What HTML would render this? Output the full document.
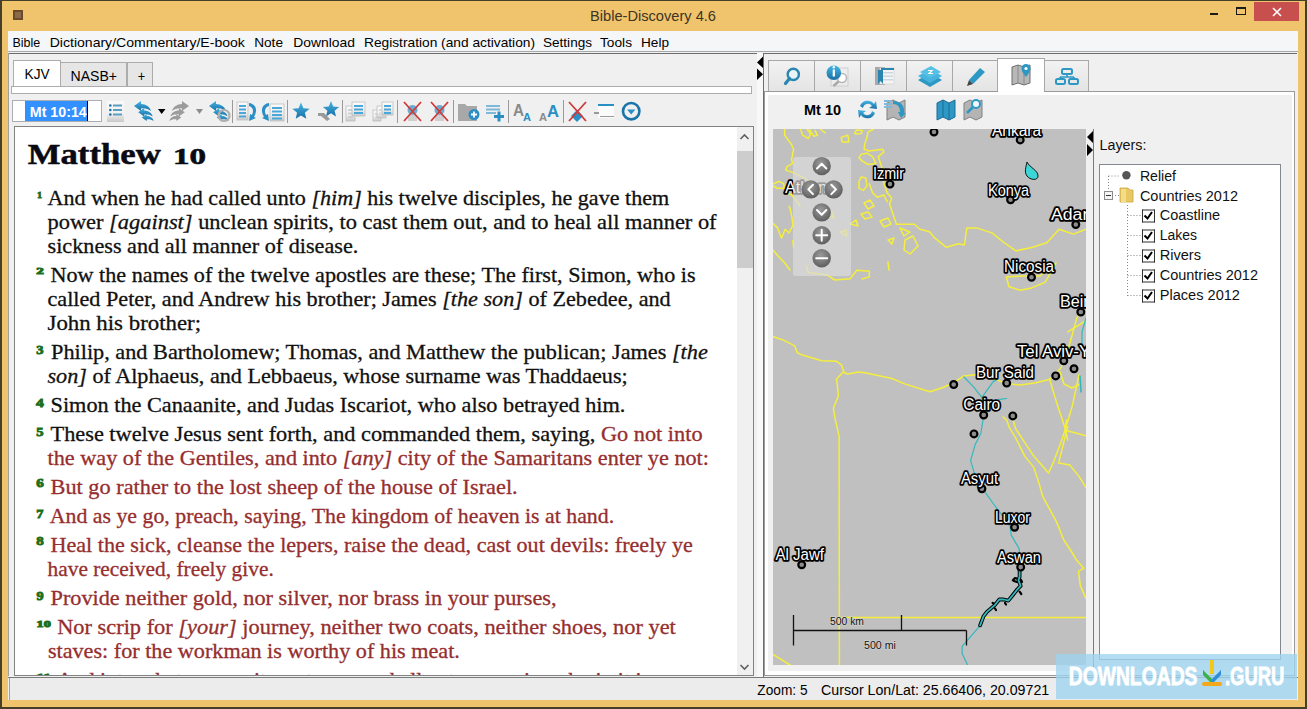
<!DOCTYPE html>
<html><head><meta charset="utf-8"><style>
html,body{margin:0;padding:0;width:1307px;height:709px;overflow:hidden;background:#F0F0F0;}
svg{display:block;}
</style></head><body>
<svg width="1307" height="709" viewBox="0 0 1307 709" shape-rendering="auto">
<rect x="0" y="0" width="1307" height="709" fill="#46402a" />
<rect x="2" y="1" width="1303" height="706" fill="#F0C46C" />
<rect x="8" y="31" width="1290" height="669" fill="#F0F0F0" />
<rect x="13" y="10" width="10" height="10" fill="#6b4a2c" />
<rect x="15" y="12" width="6" height="6" fill="#8a6a48" />
<text x="590" y="21" font-family="Liberation Sans" font-size="15" font-weight="normal" font-style="normal" fill="#3d3424" textLength="126" lengthAdjust="spacingAndGlyphs" >Bible-Discovery 4.6</text>
<rect x="1210" y="13" width="8" height="2" fill="#1a1a1a" />
<rect x="1236" y="7" width="10" height="1" fill="#1a1a1a" />
<rect x="1236" y="14" width="10" height="1" fill="#1a1a1a" />
<rect x="1236" y="7" width="1" height="8" fill="#1a1a1a" />
<rect x="1245" y="7" width="1" height="8" fill="#1a1a1a" />
<rect x="1236" y="8" width="10" height="1" fill="#1a1a1a" />
<rect x="1254" y="2" width="45" height="19" fill="#C7504F" />
<path d="M1273 8 L1281 16 M1281 8 L1273 16" stroke="#fff" stroke-width="1.6"/>
<rect x="8" y="31" width="1290" height="20" fill="#F5F6F7" />
<rect x="8" y="51" width="1290" height="1" fill="#A8A8A8" />
<text x="12.5" y="46.5" font-family="Liberation Sans" font-size="13" font-weight="normal" font-style="normal" fill="#000" textLength="27.8" lengthAdjust="spacingAndGlyphs" >Bible</text>
<text x="49.7" y="46.5" font-family="Liberation Sans" font-size="13" font-weight="normal" font-style="normal" fill="#000" textLength="195.2" lengthAdjust="spacingAndGlyphs" >Dictionary/Commentary/E-book</text>
<text x="254.2" y="46.5" font-family="Liberation Sans" font-size="13" font-weight="normal" font-style="normal" fill="#000" textLength="28.8" lengthAdjust="spacingAndGlyphs" >Note</text>
<text x="293.3" y="46.5" font-family="Liberation Sans" font-size="13" font-weight="normal" font-style="normal" fill="#000" textLength="61.7" lengthAdjust="spacingAndGlyphs" >Download</text>
<text x="364" y="46.5" font-family="Liberation Sans" font-size="13" font-weight="normal" font-style="normal" fill="#000" textLength="171" lengthAdjust="spacingAndGlyphs" >Registration (and activation)</text>
<text x="543" y="46.5" font-family="Liberation Sans" font-size="13" font-weight="normal" font-style="normal" fill="#000" textLength="49" lengthAdjust="spacingAndGlyphs" >Settings</text>
<text x="600" y="46.5" font-family="Liberation Sans" font-size="13" font-weight="normal" font-style="normal" fill="#000" textLength="32" lengthAdjust="spacingAndGlyphs" >Tools</text>
<text x="641" y="46.5" font-family="Liberation Sans" font-size="13" font-weight="normal" font-style="normal" fill="#000" textLength="28" lengthAdjust="spacingAndGlyphs" >Help</text>
<rect x="8" y="53" width="749" height="1" fill="#6E6E6E" />
<rect x="8" y="53" width="1" height="623" fill="#A0A0A0" />
<rect x="13" y="60" width="48" height="27" fill="#FFFFFF" />
<rect x="13" y="60" width="48" height="1" fill="#ACACAC" />
<rect x="13" y="86" width="48" height="1" fill="#ACACAC" />
<rect x="13" y="60" width="1" height="27" fill="#ACACAC" />
<rect x="60" y="60" width="1" height="27" fill="#ACACAC" />
<rect x="60" y="62" width="67" height="25" fill="#E6E6E6" />
<rect x="60" y="62" width="67" height="1" fill="#ACACAC" />
<rect x="60" y="86" width="67" height="1" fill="#ACACAC" />
<rect x="60" y="62" width="1" height="25" fill="#ACACAC" />
<rect x="126" y="62" width="1" height="25" fill="#ACACAC" />
<rect x="127" y="62" width="26" height="25" fill="#E6E6E6" />
<rect x="127" y="62" width="26" height="1" fill="#ACACAC" />
<rect x="127" y="86" width="26" height="1" fill="#ACACAC" />
<rect x="127" y="62" width="1" height="25" fill="#ACACAC" />
<rect x="152" y="62" width="1" height="25" fill="#ACACAC" />
<text x="24.6" y="78.5" font-family="Liberation Sans" font-size="14" font-weight="normal" font-style="normal" fill="#000" textLength="25" lengthAdjust="spacingAndGlyphs" >KJV</text>
<text x="70.5" y="80.6" font-family="Liberation Sans" font-size="14" font-weight="normal" font-style="normal" fill="#000" textLength="46.5" lengthAdjust="spacingAndGlyphs" >NASB+</text>
<text x="137.8" y="80.6" font-family="Liberation Sans" font-size="14" font-weight="normal" font-style="normal" fill="#000" textLength="7.4" lengthAdjust="spacingAndGlyphs" >+</text>
<rect x="11" y="86" width="741" height="8" fill="#FFFFFF" />
<rect x="11" y="86" width="741" height="1" fill="#ACACAC" />
<rect x="11" y="93" width="741" height="1" fill="#ACACAC" />
<rect x="11" y="86" width="1" height="8" fill="#ACACAC" />
<rect x="751" y="86" width="1" height="8" fill="#ACACAC" />
<rect x="12" y="100" width="90" height="22" fill="#FFFFFF" />
<rect x="12" y="100" width="90" height="1" fill="#ABADB3" />
<rect x="12" y="121" width="90" height="1" fill="#ABADB3" />
<rect x="12" y="100" width="1" height="22" fill="#ABADB3" />
<rect x="101" y="100" width="1" height="22" fill="#ABADB3" />
<rect x="25" y="101" width="62" height="20" fill="#3390FF" />
<rect x="87" y="101" width="1" height="20" fill="#000" />
<text x="29.8" y="116.8" font-family="Liberation Sans" font-size="14" font-weight="bold" font-style="normal" fill="#FFFFFF" textLength="57" lengthAdjust="spacingAndGlyphs" >Mt 10:14</text>
<defs><linearGradient id="pageg" x1="0" y1="0" x2="0" y2="1"><stop offset="0" stop-color="#FAFAFA"/><stop offset="0.6" stop-color="#F0F0F0"/><stop offset="1" stop-color="#C8C8C8"/></linearGradient><linearGradient id="blueg" x1="0" y1="0" x2="0" y2="1"><stop offset="0" stop-color="#45B5E6"/><stop offset="1" stop-color="#1A6FA3"/></linearGradient></defs>
<rect x="107" y="101" width="17" height="21" fill="url(#pageg)" />
<circle cx="110.3" cy="105.5" r="1.3" fill="#1B74A8"/>
<rect x="113" y="104.5" width="9" height="2" fill="#5A9EC0" />
<circle cx="110.3" cy="110" r="1.3" fill="#1B74A8"/>
<rect x="113" y="109" width="9" height="2" fill="#5A9EC0" />
<circle cx="110.3" cy="114.5" r="1.3" fill="#1B74A8"/>
<rect x="113" y="113.5" width="9" height="2" fill="#5A9EC0" />
<g transform="translate(132,101)"><path transform="translate(2.0,0) scale(1.0)" d="M0 5 L7 0 L7 3 C12 3 16 6 17 10 C14 8 11 7 7 7.5 L7 10 Z" fill="url(#blueg)"/><path transform="translate(6.2,7) scale(0.85)" d="M0 5 L7 0 L7 3 C12 3 16 6 17 10 C14 8 11 7 7 7.5 L7 10 Z" fill="url(#blueg)"/><path transform="translate(9.8,13) scale(0.7)" d="M0 5 L7 0 L7 3 C12 3 16 6 17 10 C14 8 11 7 7 7.5 L7 10 Z" fill="url(#blueg)"/></g>
<path d="M158 109 H165.5 L161.7 114 Z" fill="#000"/>
<g transform="translate(170,101) translate(21,0) scale(-1,1)"><path transform="translate(2.0,0) scale(1.0)" d="M0 5 L7 0 L7 3 C12 3 16 6 17 10 C14 8 11 7 7 7.5 L7 10 Z" fill="#9C9C9C"/><path transform="translate(6.2,7) scale(0.85)" d="M0 5 L7 0 L7 3 C12 3 16 6 17 10 C14 8 11 7 7 7.5 L7 10 Z" fill="#9C9C9C"/><path transform="translate(9.8,13) scale(0.7)" d="M0 5 L7 0 L7 3 C12 3 16 6 17 10 C14 8 11 7 7 7.5 L7 10 Z" fill="#9C9C9C"/></g>
<path d="M196 109 H203 L199.5 114 Z" fill="#8c8c8c"/>
<g transform="translate(207,101)"><path transform="translate(2.0,0) scale(1.0)" d="M0 5 L7 0 L7 3 C12 3 16 6 17 10 C14 8 11 7 7 7.5 L7 10 Z" fill="url(#blueg)"/><path transform="translate(6.2,7) scale(0.85)" d="M0 5 L7 0 L7 3 C12 3 16 6 17 10 C14 8 11 7 7 7.5 L7 10 Z" fill="url(#blueg)"/><path transform="translate(9.8,13) scale(0.7)" d="M0 5 L7 0 L7 3 C12 3 16 6 17 10 C14 8 11 7 7 7.5 L7 10 Z" fill="url(#blueg)"/></g>
<circle cx="224" cy="115.5" r="5.5" fill="none" stroke="#B0B0B0" stroke-width="2.2"/>
<rect x="232" y="100" width="1" height="23" fill="#9A9A9A" />
<rect x="287" y="100" width="1" height="23" fill="#9A9A9A" />
<rect x="342" y="100" width="1" height="23" fill="#9A9A9A" />
<rect x="397" y="100" width="1" height="23" fill="#9A9A9A" />
<rect x="453" y="100" width="1" height="23" fill="#9A9A9A" />
<rect x="508" y="100" width="1" height="23" fill="#9A9A9A" />
<rect x="563" y="100" width="1" height="23" fill="#9A9A9A" />
<rect x="237" y="102" width="11" height="18" fill="url(#pageg)" stroke="#BFBFBF" stroke-width="0.8"/>
<rect x="239" y="105.0" width="7" height="2" fill="#4AA8D8" />
<rect x="239" y="108.5" width="7" height="2" fill="#4AA8D8" />
<rect x="239" y="112.0" width="7" height="2" fill="#4AA8D8" />
<rect x="239" y="115.5" width="7" height="2" fill="#4AA8D8" />
<path d="M249 103 C256 104 258 110 254 117 L256 118 L249 121 L250 114 L252 115 C254 111 253 107 249 106 Z" fill="#2A8FC4"/>
<rect x="270" y="104" width="14" height="17" fill="url(#pageg)" stroke="#BFBFBF" stroke-width="0.8"/>
<rect x="272" y="107.0" width="10" height="2" fill="#4AA8D8" />
<rect x="272" y="110.5" width="10" height="2" fill="#4AA8D8" />
<rect x="272" y="114.0" width="10" height="2" fill="#4AA8D8" />
<rect x="272" y="117.5" width="10" height="2" fill="#4AA8D8" />
<path d="M269 103 C262 104 260 110 264 117 L262 118 L269 121 L268 114 L266 115 C264 111 265 107 269 106 Z" fill="#2A8FC4"/>
<path d="M301.0 102.5 L303.4 108.2 L309.6 108.7 L304.9 112.8 L306.3 118.8 L301.0 115.5 L295.7 118.8 L297.1 112.8 L292.4 108.7 L298.6 108.2 Z" fill="url(#blueg)"/>
<path d="M331.0 101.0 L333.2 106.4 L339.1 106.9 L334.6 110.7 L336.0 116.4 L331.0 113.3 L326.0 116.4 L327.4 110.7 L322.9 106.9 L328.8 106.4 Z" fill="url(#blueg)"/>
<path d="M318 113 L324 113 L330 119 L327 121 L321 116 L318 116 Z" fill="#9A9A9A"/>
<rect x="346" y="106" width="9" height="15" fill="url(#pageg)" stroke="#BFBFBF" stroke-width="0.8"/>
<rect x="348" y="109.0" width="5" height="2" fill="#cfcfcf" />
<rect x="348" y="112.5" width="5" height="2" fill="#cfcfcf" />
<rect x="348" y="116.0" width="5" height="2" fill="#cfcfcf" />
<rect x="352" y="102" width="13" height="14" fill="url(#pageg)" stroke="#BFBFBF" stroke-width="0.8"/>
<rect x="354" y="105.0" width="9" height="2" fill="#4AA8D8" />
<rect x="354" y="108.5" width="9" height="2" fill="#4AA8D8" />
<rect x="354" y="112.0" width="9" height="2" fill="#4AA8D8" />
<rect x="373" y="110" width="8" height="11" fill="url(#pageg)" stroke="#BFBFBF" stroke-width="0.8"/>
<rect x="375" y="113.0" width="4" height="2" fill="#d8d8d8" />
<rect x="375" y="116.5" width="4" height="2" fill="#d8d8d8" />
<rect x="377" y="106" width="9" height="12" fill="url(#pageg)" stroke="#BFBFBF" stroke-width="0.8"/>
<rect x="379" y="109.0" width="5" height="2" fill="#d8d8d8" />
<rect x="379" y="112.5" width="5" height="2" fill="#d8d8d8" />
<rect x="382" y="102" width="11" height="13" fill="url(#pageg)" stroke="#BFBFBF" stroke-width="0.8"/>
<rect x="384" y="105.0" width="7" height="2" fill="#4AA8D8" />
<rect x="384" y="108.5" width="7" height="2" fill="#4AA8D8" />
<rect x="384" y="112.0" width="7" height="2" fill="#4AA8D8" />
<circle cx="412.5" cy="110" r="5" fill="#4A9CC8" opacity="0.8"/>
<path d="M408 115 h9 v6 h-9 Z" fill="#cfcfcf"/>
<path d="M404 102 L421 121 M421 102 L404 121" stroke="#D03A3A" stroke-width="1.8"/>
<circle cx="439.5" cy="110" r="5" fill="#4A9CC8" opacity="0.8"/>
<path d="M435 115 h9 v6 h-9 Z" fill="#cfcfcf"/>
<path d="M431 102 L448 121 M448 102 L431 121" stroke="#D03A3A" stroke-width="1.8"/>
<path d="M458 104 h7 l2 2 h10 v15 h-19 Z" fill="#A8A8A8"/>
<circle cx="474" cy="114.5" r="5.5" fill="#2A8FC4"/>
<path d="M471 114.5 h6 M474 111.5 v6" stroke="#fff" stroke-width="1.8"/>
<rect x="486" y="105" width="14" height="2" fill="#7FB8D8" />
<rect x="486" y="108.5" width="14" height="2" fill="#7FB8D8" />
<rect x="486" y="112" width="10" height="2" fill="#7FB8D8" />
<path d="M494 116.5 h10 M499 111.5 v10" stroke="#2A8FC4" stroke-width="3"/>
<text x="513" y="116" font-family="Liberation Sans" font-size="16" font-weight="bold" font-style="normal" fill="#8A8A8A" textLength="11" lengthAdjust="spacingAndGlyphs" >A</text>
<text x="523" y="121" font-family="Liberation Sans" font-size="11" font-weight="bold" font-style="normal" fill="#2A8FC4" textLength="8" lengthAdjust="spacingAndGlyphs" >A</text>
<text x="539" y="121" font-family="Liberation Sans" font-size="11" font-weight="bold" font-style="normal" fill="#8A8A8A" textLength="8" lengthAdjust="spacingAndGlyphs" >A</text>
<text x="547" y="117" font-family="Liberation Sans" font-size="16" font-weight="bold" font-style="normal" fill="#2A8FC4" textLength="12" lengthAdjust="spacingAndGlyphs" >A</text>
<path d="M577 110 L583 116 L577 122 L571 116 Z" fill="#2A8FC4"/>
<path d="M569 102 L586 121 M586 102 L569 121" stroke="#D03A3A" stroke-width="1.8"/>
<rect x="598" y="104" width="16" height="2" fill="#2A8FC4" />
<rect x="598" y="106" width="16" height="12" fill="#FBFBFB" />
<rect x="594" y="112" width="5" height="2" fill="#9a9a9a" />
<rect x="600" y="116" width="14" height="1" fill="#9a9a9a" />
<circle cx="631.2" cy="111.2" r="8.2" fill="none" stroke="#1B74A8" stroke-width="2.6"/>
<path d="M627 109.5 L635.4 109.5 L631.2 114.5 Z" fill="#2A8FC4"/>
<rect x="14" y="126" width="740" height="550" fill="#FFFFFF" />
<rect x="14" y="126" width="740" height="1" fill="#828282" />
<rect x="14" y="675" width="740" height="1" fill="#828282" />
<rect x="14" y="126" width="1" height="550" fill="#828282" />
<rect x="753" y="126" width="1" height="550" fill="#828282" />
<rect x="737" y="127" width="16" height="548" fill="#F0F0F0" />
<rect x="737" y="151" width="16" height="117" fill="#CDCDCD" />
<path d="M740.5 139 L744.5 135 L748.5 139" stroke="#606060" stroke-width="1.6" fill="none"/>
<path d="M740.5 665 L744.5 669 L748.5 665" stroke="#606060" stroke-width="1.6" fill="none"/>
<text x="27.7" y="163.7" font-family="Liberation Serif" font-size="30" font-weight="bold" font-style="normal" fill="#0a0a14" textLength="133.1" lengthAdjust="spacingAndGlyphs" stroke="#0a0a14" stroke-width="0.5">Matthew</text>
<text x="173" y="163.7" font-family="Liberation Serif" font-size="23.5" font-weight="bold" font-style="normal" fill="#0a0a14" textLength="33" lengthAdjust="spacingAndGlyphs" stroke="#0a0a14" stroke-width="0.6">10</text>
<clipPath id="txtclip"><rect x="15" y="127" width="722" height="548"/></clipPath>
<g clip-path="url(#txtclip)">
<text x="37.2" y="197.5" font-family="Liberation Serif" font-size="8.14" font-weight="bold" font-style="normal" fill="#1B6F1B" textLength="4.6" lengthAdjust="spacingAndGlyphs" stroke="#1B6F1B" stroke-width="0.9">1</text>
<text x="47.6" y="204.5" font-family="Liberation Serif" font-size="21" font-weight="normal" font-style="normal" fill="#111111" textLength="621.6" lengthAdjust="spacingAndGlyphs" stroke="#111111" stroke-width="0.3">And when he had called unto <tspan font-style="italic">[him]</tspan> his twelve disciples, he gave them</text>
<text x="47.5" y="228.5" font-family="Liberation Serif" font-size="21" font-weight="normal" font-style="normal" fill="#111111" textLength="669.1" lengthAdjust="spacingAndGlyphs" stroke="#111111" stroke-width="0.3">power <tspan font-style="italic">[against]</tspan> unclean spirits, to cast them out, and to heal all manner of</text>
<text x="47.5" y="252.5" font-family="Liberation Serif" font-size="21" font-weight="normal" font-style="normal" fill="#111111" textLength="310.9" lengthAdjust="spacingAndGlyphs" stroke="#111111" stroke-width="0.3">sickness and all manner of disease.</text>
<text x="36.2" y="274.0" font-family="Liberation Serif" font-size="8.88" font-weight="bold" font-style="normal" fill="#1B6F1B" textLength="7.5" lengthAdjust="spacingAndGlyphs" stroke="#1B6F1B" stroke-width="0.9">2</text>
<text x="50.5" y="281.5" font-family="Liberation Serif" font-size="21" font-weight="normal" font-style="normal" fill="#111111" textLength="645.1" lengthAdjust="spacingAndGlyphs" stroke="#111111" stroke-width="0.3">Now the names of the twelve apostles are these; The first, Simon, who is</text>
<text x="47.5" y="305.5" font-family="Liberation Serif" font-size="21" font-weight="normal" font-style="normal" fill="#111111" textLength="623.2" lengthAdjust="spacingAndGlyphs" stroke="#111111" stroke-width="0.3">called Peter, and Andrew his brother; James <tspan font-style="italic">[the son]</tspan> of Zebedee, and</text>
<text x="47.5" y="329.5" font-family="Liberation Serif" font-size="21" font-weight="normal" font-style="normal" fill="#111111" textLength="153.5" lengthAdjust="spacingAndGlyphs" stroke="#111111" stroke-width="0.3">John his brother;</text>
<text x="36.2" y="354.0" font-family="Liberation Serif" font-size="13.31" font-weight="bold" font-style="normal" fill="#1B6F1B" textLength="7.3" lengthAdjust="spacingAndGlyphs" stroke="#1B6F1B" stroke-width="0.9">3</text>
<text x="51.0" y="358.5" font-family="Liberation Serif" font-size="21" font-weight="normal" font-style="normal" fill="#111111" textLength="656.8" lengthAdjust="spacingAndGlyphs" stroke="#111111" stroke-width="0.3">Philip, and Bartholomew; Thomas, and Matthew the publican; James <tspan font-style="italic">[the</tspan></text>
<text x="47.5" y="382.5" font-family="Liberation Serif" font-size="21" font-weight="normal" font-style="normal" fill="#111111" textLength="580.2" lengthAdjust="spacingAndGlyphs" stroke="#111111" stroke-width="0.3"><tspan font-style="italic">son]</tspan> of Alphaeus, and Lebbaeus, whose surname was Thaddaeus;</text>
<text x="36" y="407.0" font-family="Liberation Serif" font-size="13.02" font-weight="bold" font-style="normal" fill="#1B6F1B" textLength="7.8" lengthAdjust="spacingAndGlyphs" stroke="#1B6F1B" stroke-width="0.9">4</text>
<text x="50.5" y="411.5" font-family="Liberation Serif" font-size="21" font-weight="normal" font-style="normal" fill="#111111" textLength="574.9" lengthAdjust="spacingAndGlyphs" stroke="#111111" stroke-width="0.3">Simon the Canaanite, and Judas Iscariot, who also betrayed him.</text>
<text x="36.2" y="435.9" font-family="Liberation Serif" font-size="13.02" font-weight="bold" font-style="normal" fill="#1B6F1B" textLength="7.3" lengthAdjust="spacingAndGlyphs" stroke="#1B6F1B" stroke-width="0.9">5</text>
<text x="50.5" y="440.5" font-family="Liberation Serif" font-size="21" font-weight="normal" font-style="normal" fill="#111111" textLength="652.1" lengthAdjust="spacingAndGlyphs" stroke="#111111" stroke-width="0.3">These twelve Jesus sent forth, and commanded them, saying, <tspan fill="#962E2E" stroke="#962E2E">Go not into</tspan></text>
<text x="47.5" y="464.5" font-family="Liberation Serif" font-size="21" font-weight="normal" font-style="normal" fill="#962E2E" textLength="661.5" lengthAdjust="spacingAndGlyphs" stroke="#962E2E" stroke-width="0.3">the way of the Gentiles, and into <tspan font-style="italic">[any]</tspan> city of the Samaritans enter ye not:</text>
<text x="36.3" y="487.2" font-family="Liberation Serif" font-size="11.69" font-weight="bold" font-style="normal" fill="#1B6F1B" textLength="7.5" lengthAdjust="spacingAndGlyphs" stroke="#1B6F1B" stroke-width="0.9">6</text>
<text x="50.5" y="493.5" font-family="Liberation Serif" font-size="21" font-weight="normal" font-style="normal" fill="#962E2E" textLength="467.2" lengthAdjust="spacingAndGlyphs" stroke="#962E2E" stroke-width="0.3">But go rather to the lost sheep of the house of Israel.</text>
<text x="36.3" y="517.9" font-family="Liberation Serif" font-size="13.02" font-weight="bold" font-style="normal" fill="#1B6F1B" textLength="7.2" lengthAdjust="spacingAndGlyphs" stroke="#1B6F1B" stroke-width="0.9">7</text>
<text x="49.8" y="522.5" font-family="Liberation Serif" font-size="21" font-weight="normal" font-style="normal" fill="#962E2E" textLength="564.3" lengthAdjust="spacingAndGlyphs" stroke="#962E2E" stroke-width="0.3">And as ye go, preach, saying, The kingdom of heaven is at hand.</text>
<text x="36.3" y="544.7" font-family="Liberation Serif" font-size="13.31" font-weight="bold" font-style="normal" fill="#1B6F1B" textLength="7.5" lengthAdjust="spacingAndGlyphs" stroke="#1B6F1B" stroke-width="0.9">8</text>
<text x="50.5" y="551.5" font-family="Liberation Serif" font-size="21" font-weight="normal" font-style="normal" fill="#962E2E" textLength="642.3" lengthAdjust="spacingAndGlyphs" stroke="#962E2E" stroke-width="0.3">Heal the sick, cleanse the lepers, raise the dead, cast out devils: freely ye</text>
<text x="47.5" y="575.5" font-family="Liberation Serif" font-size="21" font-weight="normal" font-style="normal" fill="#962E2E" textLength="226.3" lengthAdjust="spacingAndGlyphs" stroke="#962E2E" stroke-width="0.3">have received, freely give.</text>
<text x="36.6" y="599.5" font-family="Liberation Serif" font-size="12.57" font-weight="bold" font-style="normal" fill="#1B6F1B" textLength="7.1" lengthAdjust="spacingAndGlyphs" stroke="#1B6F1B" stroke-width="0.9">9</text>
<text x="50.5" y="604.5" font-family="Liberation Serif" font-size="21" font-weight="normal" font-style="normal" fill="#962E2E" textLength="506.0" lengthAdjust="spacingAndGlyphs" stroke="#962E2E" stroke-width="0.3">Provide neither gold, nor silver, nor brass in your purses,</text>
<text x="36.6" y="626.6" font-family="Liberation Serif" font-size="8.73" font-weight="bold" font-style="normal" fill="#1B6F1B" textLength="14.2" lengthAdjust="spacingAndGlyphs" stroke="#1B6F1B" stroke-width="0.9">10</text>
<text x="57.2" y="633.5" font-family="Liberation Serif" font-size="21" font-weight="normal" font-style="normal" fill="#962E2E" textLength="618.6" lengthAdjust="spacingAndGlyphs" stroke="#962E2E" stroke-width="0.3">Nor scrip for <tspan font-style="italic">[your]</tspan> journey, neither two coats, neither shoes, nor yet</text>
<text x="47.9" y="657.5" font-family="Liberation Serif" font-size="21" font-weight="normal" font-style="normal" fill="#962E2E" textLength="412.0" lengthAdjust="spacingAndGlyphs" stroke="#962E2E" stroke-width="0.3">staves: for the workman is worthy of his meat.</text>
<text x="36.6" y="679.6" font-family="Liberation Serif" font-size="8.73" font-weight="bold" font-style="normal" fill="#1B6F1B" textLength="14.2" lengthAdjust="spacingAndGlyphs" stroke="#1B6F1B" stroke-width="0.9">11</text>
<text x="57.0" y="686.5" font-family="Liberation Serif" font-size="21" font-weight="normal" font-style="normal" fill="#962E2E" textLength="593.0" lengthAdjust="spacingAndGlyphs" stroke="#962E2E" stroke-width="0.3">And into whatsoever city or town ye shall enter, enquire who in it is</text>
</g>
<rect x="757" y="53" width="6" height="624" fill="#F8F8F8" />
<path d="M763 56.5 L757 62.5 L763 68 Z M757 68.5 L763 74.3 L757 80 Z" fill="#000"/>
<rect x="763" y="53" width="1" height="624" fill="#6E6E6E" />
<rect x="763" y="53" width="534" height="1" fill="#6E6E6E" />
<defs><linearGradient id="tabg" x1="0" y1="0" x2="0" y2="1"><stop offset="0" stop-color="#F2F2F2"/><stop offset="1" stop-color="#E4E4E4"/></linearGradient><radialGradient id="btng" cx="0.45" cy="0.35" r="0.7"><stop offset="0" stop-color="#9a9a9a"/><stop offset="1" stop-color="#5a5a5a"/></radialGradient></defs>
<rect x="764" y="54" width="533" height="37" fill="#F0F0F0" />
<rect x="768" y="61" width="46" height="30" fill="url(#tabg)" />
<rect x="768" y="60" width="47" height="1" fill="#A8A8A8" />
<rect x="768" y="91" width="47" height="1" fill="#A8A8A8" />
<rect x="768" y="60" width="1" height="32" fill="#A8A8A8" />
<rect x="814" y="60" width="1" height="32" fill="#A8A8A8" />
<rect x="814" y="61" width="46" height="30" fill="url(#tabg)" />
<rect x="814" y="60" width="47" height="1" fill="#A8A8A8" />
<rect x="814" y="91" width="47" height="1" fill="#A8A8A8" />
<rect x="814" y="60" width="1" height="32" fill="#A8A8A8" />
<rect x="860" y="60" width="1" height="32" fill="#A8A8A8" />
<rect x="860" y="61" width="46" height="30" fill="url(#tabg)" />
<rect x="860" y="60" width="47" height="1" fill="#A8A8A8" />
<rect x="860" y="91" width="47" height="1" fill="#A8A8A8" />
<rect x="860" y="60" width="1" height="32" fill="#A8A8A8" />
<rect x="906" y="60" width="1" height="32" fill="#A8A8A8" />
<rect x="906" y="61" width="46" height="30" fill="url(#tabg)" />
<rect x="906" y="60" width="47" height="1" fill="#A8A8A8" />
<rect x="906" y="91" width="47" height="1" fill="#A8A8A8" />
<rect x="906" y="60" width="1" height="32" fill="#A8A8A8" />
<rect x="952" y="60" width="1" height="32" fill="#A8A8A8" />
<rect x="952" y="61" width="45" height="30" fill="url(#tabg)" />
<rect x="952" y="60" width="46" height="1" fill="#A8A8A8" />
<rect x="952" y="91" width="46" height="1" fill="#A8A8A8" />
<rect x="952" y="60" width="1" height="32" fill="#A8A8A8" />
<rect x="997" y="60" width="1" height="32" fill="#A8A8A8" />
<rect x="997" y="58" width="48" height="34" fill="#FFFFFF" />
<rect x="997" y="58" width="48" height="1" fill="#A8A8A8" />
<rect x="997" y="91" width="48" height="1" fill="#A8A8A8" />
<rect x="997" y="58" width="1" height="34" fill="#A8A8A8" />
<rect x="1044" y="58" width="1" height="34" fill="#A8A8A8" />
<rect x="1044" y="61" width="44" height="30" fill="url(#tabg)" />
<rect x="1044" y="60" width="45" height="1" fill="#A8A8A8" />
<rect x="1044" y="91" width="45" height="1" fill="#A8A8A8" />
<rect x="1044" y="60" width="1" height="32" fill="#A8A8A8" />
<rect x="1088" y="60" width="1" height="32" fill="#A8A8A8" />
<circle cx="793.3" cy="74.4" r="5.6" fill="#EAF4F8" stroke="#2A86B0" stroke-width="2.4"/>
<path d="M789.5 78.5 L785.5 83.5" stroke="#2A86B0" stroke-width="3.2" stroke-linecap="round"/>
<rect x="831" y="68" width="17" height="18" fill="#EDEDED" stroke="#C8C8C8" stroke-width="0.8"/>
<circle cx="842" cy="78" r="4.5" fill="#fff" stroke="#B8B8B8" stroke-width="1.6"/>
<path d="M838.5 81.5 L833.5 86" stroke="#A8A8A8" stroke-width="2.4"/>
<circle cx="833.8" cy="72.8" r="7.3" fill="url(#blueg)"/>
<path d="M833.8 69.5 V76.5" stroke="#fff" stroke-width="2.2"/><circle cx="833.8" cy="67.3" r="1.2" fill="#fff"/>
<rect x="875" y="67" width="10" height="18" fill="#A8A8A8"/>
<rect x="880" y="68" width="14" height="16" fill="#F4F4F4" stroke="#D0D0D0" stroke-width="0.6"/>
<rect x="881" y="68" width="13" height="2" fill="#2A86B0" />
<rect x="883" y="72" width="10" height="1.5" fill="#C8D8E0" />
<rect x="883" y="75.5" width="10" height="1.5" fill="#C8D8E0" />
<rect x="883" y="79" width="10" height="1.5" fill="#C8D8E0" />
<path d="M878 70 h5 v14 l-2.5 -3 l-2.5 3 Z" fill="#2A86B0"/>
<path d="M918 80 L930 73 L942 80 L930 87 Z" fill="#2E98C4"/>
<path d="M918 76 L930 69 L942 76 L930 83 Z" fill="#46B4DC"/>
<path d="M920 72 L931 66 L941 72 L930 78 Z" fill="#56C0E6"/>
<path d="M928 70.5 h4 l-3 3 h4" stroke="#fff" stroke-width="1.2" fill="none"/>
<path d="M969 80 L980 68 L985 72 L973 84 Z" fill="#2E98C4"/>
<path d="M969 80 L973 84 L967 86 Z" fill="#444"/>
<path d="M1012 67 L1018 65 L1024 67 L1030 65 V83 L1024 85 L1018 83 L1012 85 Z" fill="#B8B8B8" stroke="#6E6E6E" stroke-width="1"/>
<path d="M1018 65 V83 M1024 67 V85" stroke="#8a8a8a" stroke-width="1"/>
<path d="M1026 77 C1022 72 1021.5 70 1021.5 68.5 A4.5 4.5 0 0 1 1030.5 68.5 C1030.5 70 1030 72 1026 77 Z" fill="#2E98C4"/>
<circle cx="1026" cy="68.5" r="1.6" fill="#fff"/>
<rect x="1062" y="69" width="10" height="5" rx="1.5" fill="none" stroke="#2E98C4" stroke-width="2"/>
<path d="M1067 74 V77 M1060 77 H1074 M1060 77 V79 M1074 77 V79" stroke="#2E98C4" stroke-width="1.6"/>
<rect x="1056" y="79" width="9" height="5" rx="1.5" fill="none" stroke="#2E98C4" stroke-width="2"/>
<rect x="1069" y="79" width="9" height="5" rx="1.5" fill="none" stroke="#2E98C4" stroke-width="2"/>
<rect x="765" y="91" width="530" height="584" fill="#FFFFFF" />
<rect x="764" y="91" width="531" height="1" fill="#9A9A9A" />
<rect x="764" y="675" width="531" height="1" fill="#9A9A9A" />
<rect x="764" y="91" width="1" height="585" fill="#9A9A9A" />
<rect x="1294" y="91" width="1" height="585" fill="#9A9A9A" />
<rect x="766" y="92" width="528" height="2" fill="#FFFFFF" />
<rect x="768" y="95" width="524" height="576" fill="#F0F0F0" />
<rect x="1292" y="94" width="2" height="580" fill="#FFFFFF" />
<rect x="998" y="91" width="46" height="2" fill="#FFFFFF" />
<rect x="763" y="53" width="1" height="624" fill="#6E6E6E" />
<text x="804" y="114.5" font-family="Liberation Sans" font-size="14.5" font-weight="bold" font-style="normal" fill="#000" textLength="37" lengthAdjust="spacingAndGlyphs" >Mt 10</text>
<path d="M860 106 A8 8 0 0 1 874 104 L876 101 L877 109 L869 108 L872 106 A5 5 0 0 0 863 108 Z" fill="url(#blueg)"/>
<path d="M875 113 A8 8 0 0 1 861 115 L859 118 L858 110 L866 111 L863 113 A5 5 0 0 0 872 111 Z" fill="url(#blueg)"/>
<path d="M887 103 L893 100 L899 103 L905 100 V117 L899 120 L893 117 L887 120 Z" fill="#B4B4B4" stroke="#808080" stroke-width="1"/>
<rect x="884" y="100" width="8" height="2" fill="#7FB8D8" />
<rect x="884" y="103" width="8" height="2" fill="#7FB8D8" />
<rect x="884" y="106" width="8" height="2" fill="#7FB8D8" />
<path d="M893 101 C901 101 905 106 904 113 L906 113 L901 118 L898 112 L900 112 C900 107 898 104 893 104 Z" fill="#2E98C4"/>
<path d="M937 103 L943 100 L949 103 L955 100 V117 L949 120 L943 117 L937 120 Z" fill="#2E98C4" stroke="#1A6A98" stroke-width="1"/>
<path d="M943 100 V117 M949 103 V120" stroke="#1A6A98" stroke-width="1"/>
<path d="M964 103 L970 100 L976 103 L982 100 V117 L976 120 L970 117 L964 120 Z" fill="#B4B4B4" stroke="#808080" stroke-width="1"/>
<circle cx="976" cy="104" r="4" fill="#F0F8FC" stroke="#2E98C4" stroke-width="2"/>
<path d="M973 107 L967 113" stroke="#2E98C4" stroke-width="2.6"/>
<clipPath id="mapclip"><rect x="773" y="129" width="313" height="536"/></clipPath>
<rect x="773" y="129" width="313" height="536" fill="#C0C0C0" />
<g clip-path="url(#mapclip)">
<path d="M784.7 129.0 L784.7 135.2 L788.0 139.7 L791.4 144.2 L793.7 149.8 L792.6 153.2 L792.6 155.5 L791.4 158.9 L792.6 163.4 L786.9 166.7 L785.8 170.1 L792.6 172.4 L797.1 174.6 L804.0 178.0 L810.0 182.0 L816.0 186.0" stroke="#F5EE3C" stroke-width="1.5" fill="none" stroke-linejoin="round" stroke-linecap="round"/>
<path d="M800.5 129.5 L802.7 135.2 L808.4 138.5 L810.6 134.0 L807.2 129.5" stroke="#F5EE3C" stroke-width="1.5" fill="none" stroke-linejoin="round" stroke-linecap="round"/>
<path d="M809.5 129.5 L814.0 136.3 L817.4 135.2 L815.1 130.6" stroke="#F5EE3C" stroke-width="1.5" fill="none" stroke-linejoin="round" stroke-linecap="round"/>
<path d="M820.8 129.5 L825.3 132.9" stroke="#F5EE3C" stroke-width="1.5" fill="none" stroke-linejoin="round" stroke-linecap="round"/>
<path d="M841.1 137.4 L847.9 135.2 L849.0 141.9 L842.2 141.9 Z" stroke="#F5EE3C" stroke-width="1.5" fill="none" stroke-linejoin="round" stroke-linecap="round"/>
<path d="M773.4 183.7 L779.0 181.4 L783.5 183.7 L784.7 188.2 L776.8 188.2 L773.4 186.0" stroke="#F5EE3C" stroke-width="1.5" fill="none" stroke-linejoin="round" stroke-linecap="round"/>
<path d="M786.9 192.7 L791.4 195.0 L796.0 200.0 L800.0 206.0" stroke="#F5EE3C" stroke-width="1.5" fill="none" stroke-linejoin="round" stroke-linecap="round"/>
<path d="M789.0 206.3 L790.3 208.9 L792.2 219.0 L792.9 225.4 L789.0 233.0 L785.2 229.2 L781.4 238.1 L777.6 227.9 L772.5 222.9" stroke="#F5EE3C" stroke-width="1.5" fill="none" stroke-linejoin="round" stroke-linecap="round"/>
<path d="M792.9 240.6 L793.5 247.0" stroke="#F5EE3C" stroke-width="1.5" fill="none" stroke-linejoin="round" stroke-linecap="round"/>
<path d="M773.0 250.0 L778.0 256.0 L784.0 262.0 L790.0 270.0" stroke="#F5EE3C" stroke-width="1.5" fill="none" stroke-linejoin="round" stroke-linecap="round"/>
<path d="M873.7 129.0 L868.1 131.8 L866.9 137.4 L864.7 144.2 L864.1 149.3 L869.2 151.0 L882.7 149.3 L883.9 152.1 L878.2 156.6 L880.5 163.4 L882.7 170.1 L883.9 183.7 L887.2 192.7 L891.7 198.3 L889.5 204.0 L891.9 210.8 L896.4 224.3 L914.4 224.3 L920.0 229.3 L929.6 231.7 L934.4 237.7 L946.4 247.3 L958.4 243.7 L964.4 244.9 L966.8 228.1 L977.5 228.1 L991.9 232.9 L1003.9 242.5 L1015.9 250.9 L1032.7 247.3 L1047.1 242.5 L1059.1 229.3 L1073.4 234.1 L1086.0 229.3" stroke="#F5EE3C" stroke-width="1.5" fill="none" stroke-linejoin="round" stroke-linecap="round"/>
<path d="M854.5 132.9 L856.8 130.1 L862.4 130.6 L861.3 133.5 L855.6 134.0 Z" stroke="#F5EE3C" stroke-width="1.5" fill="none" stroke-linejoin="round" stroke-linecap="round"/>
<path d="M859.0 157.7 L861.3 154.3 L866.9 153.2 L872.6 156.6 L876.0 163.4 L868.1 164.5 L862.4 161.1 Z" stroke="#F5EE3C" stroke-width="1.5" fill="none" stroke-linejoin="round" stroke-linecap="round"/>
<path d="M859.0 181.4 L861.3 176.9 L865.8 178.0 L866.9 185.9 L863.5 190.4 L859.0 188.2 Z" stroke="#F5EE3C" stroke-width="1.5" fill="none" stroke-linejoin="round" stroke-linecap="round"/>
<path d="M869.2 183.7 L872.6 192.7 L877.1 197.2 L883.9 195.0 L887.2 201.7" stroke="#F5EE3C" stroke-width="1.5" fill="none" stroke-linejoin="round" stroke-linecap="round"/>
<path d="M864.0 203.0 L870.0 200.0 L874.0 206.0 L868.0 209.0 Z" stroke="#F5EE3C" stroke-width="1.5" fill="none" stroke-linejoin="round" stroke-linecap="round"/>
<path d="M861.0 214.0 L868.0 212.0 L872.0 217.0 L865.0 219.0 Z" stroke="#F5EE3C" stroke-width="1.5" fill="none" stroke-linejoin="round" stroke-linecap="round"/>
<path d="M880.0 221.0 L888.0 218.0 L891.0 224.0 L884.0 227.0 Z" stroke="#F5EE3C" stroke-width="1.5" fill="none" stroke-linejoin="round" stroke-linecap="round"/>
<path d="M900.0 228.0 L910.0 232.0 L904.0 236.0 Z" stroke="#F5EE3C" stroke-width="1.5" fill="none" stroke-linejoin="round" stroke-linecap="round"/>
<path d="M905.0 240.0 L913.0 236.0 L918.0 246.0 L910.0 254.0 L904.0 250.0 Z" stroke="#F5EE3C" stroke-width="1.5" fill="none" stroke-linejoin="round" stroke-linecap="round"/>
<path d="M888.0 240.0 L894.0 238.0 L892.0 244.0 Z" stroke="#F5EE3C" stroke-width="1.5" fill="none" stroke-linejoin="round" stroke-linecap="round"/>
<path d="M888.0 262.0 L889.0 270.0" stroke="#F5EE3C" stroke-width="1.6" fill="none" stroke-linejoin="round" stroke-linecap="round"/>
<path d="M850.0 224.0 L856.0 220.0 L858.0 226.0 Z" stroke="#F5EE3C" stroke-width="1.5" fill="none" stroke-linejoin="round" stroke-linecap="round"/>
<path d="M840.0 232.0 L846.0 230.0 L847.0 236.0 Z" stroke="#F5EE3C" stroke-width="1.5" fill="none" stroke-linejoin="round" stroke-linecap="round"/>
<path d="M826.0 214.0 L832.0 212.0 L834.0 218.0 Z" stroke="#F5EE3C" stroke-width="1.5" fill="none" stroke-linejoin="round" stroke-linecap="round"/>
<path d="M806.8 266.0 L808.1 272.4 L827.1 274.9 L834.8 280.0 L850.0 278.7 L856.9 270.2 L869.3 271.3 L869.3 276.9 L862.0 279.0" stroke="#F5EE3C" stroke-width="1.5" fill="none" stroke-linejoin="round" stroke-linecap="round"/>
<path d="M1006.3 277.0 L1009.0 286.8 L1020.3 290.2 L1031.6 287.9 L1045.1 282.3 L1056.0 263.0 L1040.0 276.0 L1022.0 276.0 Z" stroke="#F5EE3C" stroke-width="1.5" fill="none" stroke-linejoin="round" stroke-linecap="round"/>
<path d="M773.4 336.7 L783.5 340.1 L794.8 345.8 L797.1 352.5 L801.6 354.8 L815.0 358.8 L821.3 360.7 L836.6 361.3 L841.6 365.2 L844.2 372.8 L848.0 374.0 L858.1 372.1 L865.0 372.8 L891.9 378.5 L905.4 384.1 L930.0 391.7 L943.5 387.2 L953.7 382.7 L963.9 375.9 L975.1 374.8 L995.4 379.3 L1006.7 383.8 L1020.3 384.9 L1036.1 382.7 L1049.6 379.3 L1060.9 368.0 L1069.9 343.2 L1076.7 318.4 L1086.0 302.6" stroke="#F5EE3C" stroke-width="1.5" fill="none" stroke-linejoin="round" stroke-linecap="round"/>
<path d="M843.6 371.5 L836.6 379.1 L838.5 395.6 L833.4 408.3 L835.3 419.7 L839.1 436.2 L839.4 665.0" stroke="#F5EE3C" stroke-width="1.5" fill="none" stroke-linejoin="round" stroke-linecap="round"/>
<path d="M839.4 617.5 L1086.0 617.5" stroke="#F5EE3C" stroke-width="1.5" fill="none" stroke-linejoin="round" stroke-linecap="round"/>
<path d="M773.0 654.3 L790.1 665.0" stroke="#F5EE3C" stroke-width="1.5" fill="none" stroke-linejoin="round" stroke-linecap="round"/>
<path d="M1067.7 331.9 L1086.0 320.6" stroke="#F5EE3C" stroke-width="1.5" fill="none" stroke-linejoin="round" stroke-linecap="round"/>
<path d="M1049.6 379.3 L1056.4 401.9 L1065.4 429.0 L1067.7 440.0" stroke="#F5EE3C" stroke-width="1.5" fill="none" stroke-linejoin="round" stroke-linecap="round"/>
<path d="M1079.0 374.8 L1072.2 406.4 L1065.4 429.0" stroke="#F5EE3C" stroke-width="1.5" fill="none" stroke-linejoin="round" stroke-linecap="round"/>
<path d="M1060.0 372.0 L1064.0 384.0 L1072.0 388.0 L1080.0 384.0" stroke="#F5EE3C" stroke-width="1.5" fill="none" stroke-linejoin="round" stroke-linecap="round"/>
<path d="M1065.4 430.2 L1086.0 435.8" stroke="#F5EE3C" stroke-width="1.5" fill="none" stroke-linejoin="round" stroke-linecap="round"/>
<path d="M1003.0 417.0 L1006.7 420.0 L1009.0 426.8 L1015.8 438.1 L1024.8 456.1 L1033.8 467.4 L1038.3 480.9 L1042.8 496.7 L1056.4 521.6 L1063.8 540.0 L1071.1 551.0 L1076.6 560.2 L1084.0 568.4 L1078.5 571.2 L1080.3 585.8 L1086.0 598.7" stroke="#F5EE3C" stroke-width="1.5" fill="none" stroke-linejoin="round" stroke-linecap="round"/>
<path d="M1012.4 418.0 L1015.8 429.0 L1024.8 442.6 L1033.8 456.1 L1048.5 473.0 L1054.1 460.6 L1060.9 442.6 L1065.4 429.0 L1066.5 420.0" stroke="#F5EE3C" stroke-width="1.5" fill="none" stroke-linejoin="round" stroke-linecap="round"/>
<path d="M1067.7 426.8 L1058.6 462.9 L1069.9 465.1 L1079.0 476.4 L1086.0 487.7" stroke="#F5EE3C" stroke-width="1.5" fill="none" stroke-linejoin="round" stroke-linecap="round"/>
<path d="M963.9 377.0 L972.9 386.1 L981.9 397.4 L983.7 415.0 L983.0 420.0 L980.8 433.5 L975.1 444.8 L970.6 460.6 L974.0 471.9 L981.9 487.7 L993.2 503.5 L1000.0 512.5 L1010.1 526.1 L1011.2 535.1 L1019.1 548.6 L1020.3 566.7 L1019.8 584.0" stroke="#33B8BE" stroke-width="1.2" fill="none" stroke-linejoin="round" stroke-linecap="round"/>
<path d="M981.9 397.4 L993.2 381.6 L997.7 379.3" stroke="#33B8BE" stroke-width="1.2" fill="none" stroke-linejoin="round" stroke-linecap="round"/>
<path d="M997.7 399.6 L1006.7 398.5" stroke="#33B8BE" stroke-width="1.2" fill="none" stroke-linejoin="round" stroke-linecap="round"/>
<path d="M980.1 625.4 L974.5 632.2 L968.5 639.0 L962.1 646.3 L962.1 653.6 L967.6 665.0" stroke="#33B8BE" stroke-width="1.2" fill="none" stroke-linejoin="round" stroke-linecap="round"/>
<path d="M1012.9 580.3 L1015.0 578.0 L1018.0 579.0" stroke="#000" stroke-width="2.2" fill="none" stroke-linejoin="round" stroke-linecap="round"/>
<path d="M1014.0 581.0 L1017.0 582.0" stroke="#000" stroke-width="2.2" fill="none" stroke-linejoin="round" stroke-linecap="round"/>
<path d="M1021.0 580.0 L1022.0 582.0" stroke="#000" stroke-width="2.2" fill="none" stroke-linejoin="round" stroke-linecap="round"/>
<path d="M1019.6 591.6 L1021.3 594.0" stroke="#000" stroke-width="2.2" fill="none" stroke-linejoin="round" stroke-linecap="round"/>
<path d="M992.6 602.9 L995.0 604.0" stroke="#000" stroke-width="2.2" fill="none" stroke-linejoin="round" stroke-linecap="round"/>
<path d="M995.0 608.5 L996.0 610.0" stroke="#000" stroke-width="2.2" fill="none" stroke-linejoin="round" stroke-linecap="round"/>
<path d="M1005.0 602.9 L1006.0 604.5" stroke="#000" stroke-width="2.2" fill="none" stroke-linejoin="round" stroke-linecap="round"/>
<path d="M1019.6 570.2 L1019.6 576.9 L1018.5 580.3 L1020.7 585.9 L1017.4 589.3 L1012.9 595.0 L1008.3 600.6 L1003.8 599.5 L999.3 599.5 L994.8 605.1 L986.9 611.9 L983.5 616.4 L980.1 625.4" stroke="#000" stroke-width="3.8" fill="none" stroke-linejoin="round" stroke-linecap="round"/>
<path d="M1019.6 570.2 L1019.6 576.9 L1018.5 580.3 L1020.7 585.9 L1017.4 589.3 L1012.9 595.0 L1008.3 600.6 L1003.8 599.5 L999.3 599.5 L994.8 605.1 L986.9 611.9 L983.5 616.4 L980.1 625.4" stroke="#33B8BE" stroke-width="1.8" fill="none" stroke-linejoin="round" stroke-linecap="round"/>
<path d="M1027 162 C1030 168 1038 170 1038 176 C1038 181 1030 180 1027 176 C1024 172 1026 167 1027 162 Z" fill="#3CD6D6" stroke="#111" stroke-width="1"/>
<path d="M1086.0 318.0 L1082.0 332.0 L1082.0 350.0" stroke="#33B8BE" stroke-width="1.2" fill="none" stroke-linejoin="round" stroke-linecap="round"/>
<path d="M1080.0 376.0 L1081.0 392.0" stroke="#33B8BE" stroke-width="1.6" fill="none" stroke-linejoin="round" stroke-linecap="round"/>
<path d="M793.5 615 V645.5 M793.5 630.5 H966.5 M901.5 615 V630.5 M966.5 630.5 V645.5" stroke="#111" stroke-width="1.3" fill="none"/>
<text x="830" y="624.5" font-family="Liberation Sans" font-size="11.5" font-weight="normal" font-style="normal" fill="#111" textLength="34" lengthAdjust="spacingAndGlyphs" stroke="#d8d8d8" stroke-width="1.2" paint-order="stroke">500 km</text>
<text x="864" y="648.5" font-family="Liberation Sans" font-size="11.5" font-weight="normal" font-style="normal" fill="#111" textLength="32" lengthAdjust="spacingAndGlyphs" stroke="#d8d8d8" stroke-width="1.2" paint-order="stroke">500 mi</text>
<circle cx="934" cy="132" r="3.4" fill="#8c8c8c" stroke="#000" stroke-width="2.2"/>
<circle cx="1020.2" cy="139.9" r="3.4" fill="#8c8c8c" stroke="#000" stroke-width="2.2"/>
<circle cx="890" cy="184.1" r="3.4" fill="#8c8c8c" stroke="#000" stroke-width="2.2"/>
<circle cx="1010.6" cy="199.8" r="3.4" fill="#8c8c8c" stroke="#000" stroke-width="2.2"/>
<circle cx="1075.8" cy="224.5" r="3.4" fill="#8c8c8c" stroke="#000" stroke-width="2.2"/>
<circle cx="1031.5" cy="277.2" r="3.4" fill="#8c8c8c" stroke="#000" stroke-width="2.2"/>
<circle cx="1080.8" cy="312" r="3.4" fill="#8c8c8c" stroke="#000" stroke-width="2.2"/>
<circle cx="1063.8" cy="360.8" r="3.4" fill="#8c8c8c" stroke="#000" stroke-width="2.2"/>
<circle cx="1074" cy="368.7" r="3.4" fill="#8c8c8c" stroke="#000" stroke-width="2.2"/>
<circle cx="1055.7" cy="375.9" r="3.4" fill="#8c8c8c" stroke="#000" stroke-width="2.2"/>
<circle cx="1006.7" cy="383.1" r="3.4" fill="#8c8c8c" stroke="#000" stroke-width="2.2"/>
<circle cx="953.7" cy="384.5" r="3.4" fill="#8c8c8c" stroke="#000" stroke-width="2.2"/>
<circle cx="983.7" cy="415" r="3.4" fill="#8c8c8c" stroke="#000" stroke-width="2.2"/>
<circle cx="1012.8" cy="415.9" r="3.4" fill="#8c8c8c" stroke="#000" stroke-width="2.2"/>
<circle cx="974" cy="433.9" r="3.4" fill="#8c8c8c" stroke="#000" stroke-width="2.2"/>
<circle cx="981.9" cy="488.8" r="3.4" fill="#8c8c8c" stroke="#000" stroke-width="2.2"/>
<circle cx="1014.6" cy="527.2" r="3.4" fill="#8c8c8c" stroke="#000" stroke-width="2.2"/>
<circle cx="1020.7" cy="567.1" r="3.4" fill="#8c8c8c" stroke="#000" stroke-width="2.2"/>
<circle cx="801.7" cy="564.8" r="3.4" fill="#8c8c8c" stroke="#000" stroke-width="2.2"/>
<text x="992" y="136" font-family="Liberation Sans" font-size="16" font-weight="normal" font-style="normal" fill="#fff" textLength="49" lengthAdjust="spacingAndGlyphs" stroke="#000" stroke-width="3.6" paint-order="stroke" stroke-linejoin="round">Ankara</text>
<text x="873" y="179" font-family="Liberation Sans" font-size="16" font-weight="normal" font-style="normal" fill="#fff" textLength="31" lengthAdjust="spacingAndGlyphs" stroke="#000" stroke-width="3.6" paint-order="stroke" stroke-linejoin="round">Izmir</text>
<text x="988" y="195.5" font-family="Liberation Sans" font-size="16" font-weight="normal" font-style="normal" fill="#fff" textLength="41" lengthAdjust="spacingAndGlyphs" stroke="#000" stroke-width="3.6" paint-order="stroke" stroke-linejoin="round">Konya</text>
<text x="1051" y="220" font-family="Liberation Sans" font-size="16" font-weight="normal" font-style="normal" fill="#fff" textLength="51" lengthAdjust="spacingAndGlyphs" stroke="#000" stroke-width="3.6" paint-order="stroke" stroke-linejoin="round">Adana</text>
<text x="1004" y="271.5" font-family="Liberation Sans" font-size="16" font-weight="normal" font-style="normal" fill="#fff" textLength="50" lengthAdjust="spacingAndGlyphs" stroke="#000" stroke-width="3.6" paint-order="stroke" stroke-linejoin="round">Nicosia</text>
<text x="1060" y="307" font-family="Liberation Sans" font-size="16" font-weight="normal" font-style="normal" fill="#fff" textLength="42" lengthAdjust="spacingAndGlyphs" stroke="#000" stroke-width="3.6" paint-order="stroke" stroke-linejoin="round">Beirut</text>
<text x="1017" y="356.5" font-family="Liberation Sans" font-size="16" font-weight="normal" font-style="normal" fill="#fff" textLength="95" lengthAdjust="spacingAndGlyphs" stroke="#000" stroke-width="3.6" paint-order="stroke" stroke-linejoin="round">Tel Aviv-Yafo</text>
<text x="976" y="378" font-family="Liberation Sans" font-size="16" font-weight="normal" font-style="normal" fill="#fff" textLength="58" lengthAdjust="spacingAndGlyphs" stroke="#000" stroke-width="3.6" paint-order="stroke" stroke-linejoin="round">Bur Said</text>
<text x="963.3" y="410" font-family="Liberation Sans" font-size="16" font-weight="normal" font-style="normal" fill="#fff" textLength="36.8" lengthAdjust="spacingAndGlyphs" stroke="#000" stroke-width="3.6" paint-order="stroke" stroke-linejoin="round">Cairo</text>
<text x="961" y="484" font-family="Liberation Sans" font-size="16" font-weight="normal" font-style="normal" fill="#fff" textLength="37" lengthAdjust="spacingAndGlyphs" stroke="#000" stroke-width="3.6" paint-order="stroke" stroke-linejoin="round">Asyut</text>
<text x="995" y="522.5" font-family="Liberation Sans" font-size="16" font-weight="normal" font-style="normal" fill="#fff" textLength="35" lengthAdjust="spacingAndGlyphs" stroke="#000" stroke-width="3.6" paint-order="stroke" stroke-linejoin="round">Luxor</text>
<text x="997" y="562.5" font-family="Liberation Sans" font-size="16" font-weight="normal" font-style="normal" fill="#fff" textLength="44" lengthAdjust="spacingAndGlyphs" stroke="#000" stroke-width="3.6" paint-order="stroke" stroke-linejoin="round">Aswan</text>
<text x="775.5" y="560" font-family="Liberation Sans" font-size="16" font-weight="normal" font-style="normal" fill="#fff" textLength="48.5" lengthAdjust="spacingAndGlyphs" stroke="#000" stroke-width="3.6" paint-order="stroke" stroke-linejoin="round">Al Jawf</text>
<text x="785" y="192.5" font-family="Liberation Sans" font-size="16" font-weight="normal" font-style="normal" fill="#fff" textLength="50" lengthAdjust="spacingAndGlyphs" stroke="#000" stroke-width="3.6" paint-order="stroke" stroke-linejoin="round">Athens</text>
<rect x="793" y="157" width="58" height="119" rx="3" fill="#DCDCDC" fill-opacity="0.7"/>
<circle cx="821.7" cy="166.1" r="9.2" fill="url(#btng)"/>
<circle cx="821.7" cy="212.4" r="9.2" fill="url(#btng)"/>
<circle cx="821.7" cy="235.3" r="9.2" fill="url(#btng)"/>
<circle cx="821.7" cy="258.2" r="9.2" fill="url(#btng)"/>
<circle cx="810.7" cy="189.4" r="9.2" fill="url(#btng)"/>
<circle cx="833.6" cy="189.4" r="9.2" fill="url(#btng)"/>
<path d="M817 168.5 L821.7 163.8 L826.4 168.5" stroke="#fff" stroke-width="2" fill="none" stroke-linecap="round" stroke-linejoin="round"/>
<path d="M817 210 L821.7 214.7 L826.4 210" stroke="#fff" stroke-width="2" fill="none" stroke-linecap="round" stroke-linejoin="round"/>
<path d="M813 184.7 L808.3 189.4 L813 194.1" stroke="#fff" stroke-width="2" fill="none" stroke-linecap="round" stroke-linejoin="round"/>
<path d="M831.3 184.7 L836 189.4 L831.3 194.1" stroke="#fff" stroke-width="2" fill="none" stroke-linecap="round" stroke-linejoin="round"/>
<path d="M816.2 235.3 H827.2 M821.7 229.8 V240.8" stroke="#fff" stroke-width="2" fill="none" stroke-linecap="round" stroke-linejoin="round"/>
<path d="M816.2 258.2 H827.2" stroke="#fff" stroke-width="2" fill="none" stroke-linecap="round" stroke-linejoin="round"/>
</g>
<rect x="1086" y="129" width="7" height="536" fill="#F0F0F0" />
<rect x="1093" y="129" width="1" height="543" fill="#7A7A7A" />
<path d="M1093 131 L1087 137 L1093 143 Z M1087 144 L1093 150 L1087 156 Z" fill="#000"/>
<text x="1099.5" y="150" font-family="Liberation Sans" font-size="14" font-weight="normal" font-style="normal" fill="#111" textLength="47" lengthAdjust="spacingAndGlyphs" >Layers:</text>
<rect x="1099" y="164" width="182" height="496" fill="#FFFFFF" />
<rect x="1099" y="164" width="182" height="1" fill="#828790" />
<rect x="1099" y="659" width="182" height="1" fill="#828790" />
<rect x="1099" y="164" width="1" height="496" fill="#828790" />
<rect x="1280" y="164" width="1" height="496" fill="#828790" />
<path d="M1108.5 176 H1119 M1108.5 176 V191" stroke="#888" stroke-width="1" stroke-dasharray="1 2" fill="none"/>
<path d="M1112 195.5 H1119" stroke="#888" stroke-width="1" stroke-dasharray="1 2" fill="none"/>
<path d="M1127.5 205 V296 M1127.5 215.5 H1141 M1127.5 235.5 H1141 M1127.5 255.5 H1141 M1127.5 275.5 H1141 M1127.5 295.5 H1141" stroke="#888" stroke-width="1" stroke-dasharray="1 2" fill="none"/>
<circle cx="1126.4" cy="175.3" r="4.2" fill="#555"/>
<rect x="1104" y="191" width="9" height="9" fill="#f4f4f4" />
<rect x="1104" y="191" width="9" height="1" fill="#8a8a8a" />
<rect x="1104" y="199" width="9" height="1" fill="#8a8a8a" />
<rect x="1104" y="191" width="1" height="9" fill="#8a8a8a" />
<rect x="1112" y="191" width="1" height="9" fill="#8a8a8a" />
<rect x="1106" y="195" width="5" height="1" fill="#333" />
<path d="M1120 188 h8 l2 2 h3 v12 h-13 Z" fill="#E8C862" stroke="#C9A640" stroke-width="0.8"/>
<path d="M1121 189 h5 v13 h-5 Z" fill="#F4DC88"/>
<text x="1139.9" y="180.7" font-family="Liberation Sans" font-size="14" font-weight="normal" font-style="normal" fill="#111" textLength="36.1" lengthAdjust="spacingAndGlyphs" >Relief</text>
<text x="1139.9" y="200.5" font-family="Liberation Sans" font-size="14" font-weight="normal" font-style="normal" fill="#111" textLength="98.1" lengthAdjust="spacingAndGlyphs" >Countries 2012</text>
<text x="1159.7" y="220.4" font-family="Liberation Sans" font-size="14" font-weight="normal" font-style="normal" fill="#111" textLength="60.3" lengthAdjust="spacingAndGlyphs" >Coastline</text>
<text x="1159.7" y="240.4" font-family="Liberation Sans" font-size="14" font-weight="normal" font-style="normal" fill="#111" textLength="37.3" lengthAdjust="spacingAndGlyphs" >Lakes</text>
<text x="1159.7" y="260.4" font-family="Liberation Sans" font-size="14" font-weight="normal" font-style="normal" fill="#111" textLength="41.3" lengthAdjust="spacingAndGlyphs" >Rivers</text>
<text x="1159.7" y="280.4" font-family="Liberation Sans" font-size="14" font-weight="normal" font-style="normal" fill="#111" textLength="98.3" lengthAdjust="spacingAndGlyphs" >Countries 2012</text>
<text x="1159.7" y="300.4" font-family="Liberation Sans" font-size="14" font-weight="normal" font-style="normal" fill="#111" textLength="80.3" lengthAdjust="spacingAndGlyphs" >Places 2012</text>
<rect x="1142" y="209.5" width="13" height="13.0" fill="#fff" />
<rect x="1142" y="209.5" width="13" height="1" fill="#333" />
<rect x="1142" y="221.5" width="13" height="1" fill="#333" />
<rect x="1142" y="209.5" width="1" height="13.0" fill="#333" />
<rect x="1154" y="209.5" width="1" height="13.0" fill="#333" />
<path d="M1144.5 215.5 L1147.5 218.5 L1152 212.0" stroke="#000" stroke-width="2" fill="none"/>
<rect x="1142" y="229.5" width="13" height="13.0" fill="#fff" />
<rect x="1142" y="229.5" width="13" height="1" fill="#333" />
<rect x="1142" y="241.5" width="13" height="1" fill="#333" />
<rect x="1142" y="229.5" width="1" height="13.0" fill="#333" />
<rect x="1154" y="229.5" width="1" height="13.0" fill="#333" />
<path d="M1144.5 235.5 L1147.5 238.5 L1152 232.0" stroke="#000" stroke-width="2" fill="none"/>
<rect x="1142" y="249.5" width="13" height="13.0" fill="#fff" />
<rect x="1142" y="249.5" width="13" height="1" fill="#333" />
<rect x="1142" y="261.5" width="13" height="1" fill="#333" />
<rect x="1142" y="249.5" width="1" height="13.0" fill="#333" />
<rect x="1154" y="249.5" width="1" height="13.0" fill="#333" />
<path d="M1144.5 255.5 L1147.5 258.5 L1152 252.0" stroke="#000" stroke-width="2" fill="none"/>
<rect x="1142" y="269.5" width="13" height="13.0" fill="#fff" />
<rect x="1142" y="269.5" width="13" height="1" fill="#333" />
<rect x="1142" y="281.5" width="13" height="1" fill="#333" />
<rect x="1142" y="269.5" width="1" height="13.0" fill="#333" />
<rect x="1154" y="269.5" width="1" height="13.0" fill="#333" />
<path d="M1144.5 275.5 L1147.5 278.5 L1152 272.0" stroke="#000" stroke-width="2" fill="none"/>
<rect x="1142" y="289.5" width="13" height="13.0" fill="#fff" />
<rect x="1142" y="289.5" width="13" height="1" fill="#333" />
<rect x="1142" y="301.5" width="13" height="1" fill="#333" />
<rect x="1142" y="289.5" width="1" height="13.0" fill="#333" />
<rect x="1154" y="289.5" width="1" height="13.0" fill="#333" />
<path d="M1144.5 295.5 L1147.5 298.5 L1152 292.0" stroke="#000" stroke-width="2" fill="none"/>
<rect x="8" y="677" width="1290" height="1" fill="#7A7A7A" />
<rect x="9" y="678" width="1288" height="22" fill="#ECECEC" />
<rect x="9" y="678" width="1" height="22" fill="#A0A0A0" />
<text x="757.3" y="694.5" font-family="Liberation Sans" font-size="14" font-weight="normal" font-style="normal" fill="#000" textLength="50.2" lengthAdjust="spacingAndGlyphs" >Zoom: 5</text>
<text x="821" y="694.5" font-family="Liberation Sans" font-size="14" font-weight="normal" font-style="normal" fill="#000" textLength="228.2" lengthAdjust="spacingAndGlyphs" >Cursor Lon/Lat: 25.66406, 20.09721</text>
<rect x="1056" y="654" width="241" height="45" fill="#9ED4F0" fill-opacity="0.78"/>
<text x="1068.7" y="685.2" font-family="Liberation Sans" font-size="25" font-weight="bold" font-style="normal" fill="#fff" textLength="128.8" lengthAdjust="spacingAndGlyphs" stroke="#fff" stroke-width="0.8">DOWNLOADS</text>
<path d="M1210 660 h4 v14 h-4 Z" fill="#F2C81A"/>
<path d="M1203 670 L1212 679 L1212 684 L1203 675 Z" fill="#3DB04A"/>
<path d="M1221 670 L1212 679 L1212 684 L1221 675 Z" fill="#2E8FD8"/>
<rect x="1202" y="682" width="20" height="4" rx="2" fill="#F2A81A"/>
<text x="1225" y="685.2" font-family="Liberation Sans" font-size="25" font-weight="bold" font-style="normal" fill="#fff" textLength="59.4" lengthAdjust="spacingAndGlyphs" stroke="#fff" stroke-width="0.8">.GURU</text>
</svg>
</body></html>
